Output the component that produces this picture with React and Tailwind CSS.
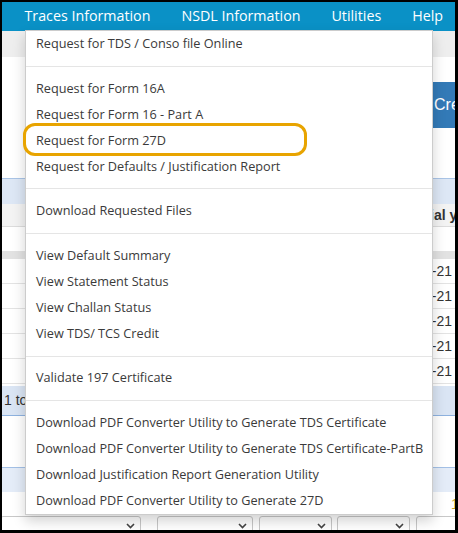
import React from "react";

const menuGroups = [
  ["Request for TDS / Conso file Online"],
  [
    "Request for Form 16A",
    "Request for Form 16 - Part A",
    "Request for Form 27D",
    "Request for Defaults / Justification Report",
  ],
  ["Download Requested Files"],
  [
    "View Default Summary",
    "View Statement Status",
    "View Challan Status",
    "View TDS/ TCS Credit",
  ],
  ["Validate 197 Certificate"],
  [
    "Download PDF Converter Utility to Generate TDS Certificate",
    "Download PDF Converter Utility to Generate TDS Certificate-PartB",
    "Download Justification Report Generation Utility",
    "Download PDF Converter Utility to Generate 27D",
  ],
];

const navItems = ["Traces Information", "NSDL Information", "Utilities", "Help"];

const Chevron = () => (
  <svg width="9" height="6" viewBox="0 0 9 6" className="shrink-0">
    <polyline points="1,1 4.5,4.5 8,1" fill="none" stroke="#444" strokeWidth="1.6" />
  </svg>
);

const SelectBox = ({ className }) => (
  <div
    className={`shrink-0 h-[20px] border border-[#c8c8c8] rounded-[3px] bg-white flex items-start justify-end pt-[6px] pr-[5px] ${className}`}
  >
    <Chevron />
  </div>
);

const DataRow = () => (
  <div className="h-[25px] border-b border-[#e3e3e3] flex items-center justify-end pr-[3px] text-[14px] text-[#333]">
    <span className="whitespace-nowrap">2020-21</span>
  </div>
);

export default function App() {
  return (
    <div className="w-[458px] h-[533px] bg-black pt-[2px] pl-[2px] pr-[3px] pb-[3px]">
      <div
        className="relative w-full h-full bg-white overflow-hidden flex flex-col"
        style={{ fontFamily: "Arial, 'Liberation Sans', sans-serif" }}
      >
        {/* top navigation */}
        <div
          className="h-[29px] shrink-0 bg-[#0a91c6] flex items-center pl-[7px] pb-[2px]"
          style={{ fontFamily: "'Open Sans', 'Noto Sans', sans-serif" }}
        >
          {navItems.map((n) => (
            <span key={n} className="px-[15.5px] text-[14.25px] text-white whitespace-nowrap">
              {n}
            </span>
          ))}
        </div>
        <div className="h-[26px] shrink-0 bg-[#eeeeee]" />
        <div className="h-[25px] shrink-0" />

        {/* create button row */}
        <div className="h-[46px] shrink-0 pl-[420px] overflow-hidden">
          <div className="h-full bg-[#337ab7] pl-[12px] flex items-center text-white text-[16px] whitespace-nowrap">
            Create Request
          </div>
        </div>
        <div className="h-[50px] shrink-0" />

        {/* grid */}
        <div className="h-[26px] shrink-0 bg-[#dde7f5] border-t border-[#a9c4e6]" />
        <div className="h-[23px] shrink-0 bg-[#f3f3f3] border-b border-[#dcdcdc] flex items-center overflow-hidden pl-[383px]">
          <span className="whitespace-nowrap font-bold text-[14px] text-[#333]">Financial year</span>
        </div>
        <div className="h-[24px] shrink-0" />
        <div className="h-[8px] shrink-0 bg-[#e2e2e2]" />
        <div className="shrink-0 flex flex-col">
          <DataRow />
          <DataRow />
          <DataRow />
          <DataRow />
          <DataRow />
        </div>
        <div className="h-[2px] shrink-0" />
        <div className="h-[30px] shrink-0 bg-[#dae5f4] border-b border-[#8eb2df] flex items-center pl-[2px] text-[14px] text-[#333]">
          1 to 5 of 5
        </div>
        <div className="h-[51px] shrink-0" />
        <div className="h-[25px] shrink-0 bg-[#e4ecf8] border-t border-[#a3c0e6]" />
        <div className="h-[24px] shrink-0 flex items-center pl-[449px] text-[14px] text-[#c9a227] overflow-hidden">
          <span className="whitespace-nowrap">1</span>
        </div>
        <div className="shrink-0 flex items-start">
          <SelectBox className="w-[141px] -ml-[2px]" />
          <SelectBox className="w-[96px] ml-[16px]" />
          <SelectBox className="w-[73px] ml-[6px]" />
          <SelectBox className="w-[73px] ml-[5px]" />
          <SelectBox className="w-[60px] ml-[6px]" />
        </div>

        {/* dropdown menu */}
        <div
          className="absolute left-[23px] top-[28px] w-[408px] bg-white border border-[#cccccc] shadow-[0_6px_12px_rgba(0,0,0,0.18)] flex flex-col"
          style={{ fontFamily: "'Open Sans', 'Noto Sans', sans-serif" }}
        >
          {menuGroups.map((group, gi) => (
            <React.Fragment key={gi}>
              {gi > 0 && <div className="h-px my-[8.8px] bg-[#e5e5e5]" />}
              {group.map((item) => (
                <div
                  key={item}
                  className="h-[26px] flex items-center pl-[10px] pb-[1px] text-[12.7px] text-[#3a3a3a] whitespace-nowrap"
                >
                  {item}
                </div>
              ))}
            </React.Fragment>
          ))}
        </div>

        {/* highlight */}
        <div className="absolute left-[21px] top-[121px] w-[284px] h-[33px] border-[3px] border-[#e8a400] rounded-[12px]" />
      </div>
    </div>
  );
}
